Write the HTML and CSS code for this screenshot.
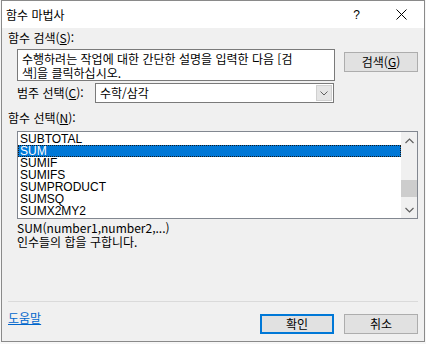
FILE: index.html
```html
<!DOCTYPE html>
<html lang="ko">
<head>
<meta charset="utf-8">
<title>함수 마법사</title>
<link rel="stylesheet" href="styles.css">
</head>
<body>
<div class="win">
  <div class="titlebar">
    <span class="title">함수 마법사</span>
    <span class="tb-btn help">?</span>
    <span class="tb-btn close">
      <svg width="11" height="11" viewBox="0 0 11 11"><path d="M0.5 0.5 L10.5 10.5 M10.5 0.5 L0.5 10.5" stroke="#000" stroke-width="1" fill="none"/></svg>
    </span>
  </div>
  <div class="content">
    <div class="label">함수 검색(<u>S</u>):</div>
    <div class="search-row">
      <div class="search-box">수행하려는 작업에 대한 간단한 설명을 입력한 다음 [검<br>색]을 클릭하십시오.</div>
      <div class="btn search-btn">검색(<u>G</u>)</div>
    </div>
    <div class="cat-row">
      <span class="cat-label">범주 선택(<u>C</u>):</span>
      <div class="combo">
        <span class="combo-text">수학/삼각</span>
        <span class="drop">
          <svg width="8" height="5" viewBox="0 0 8 5"><path d="M0.5 0.5 L4 4 L7.5 0.5" stroke="#606060" stroke-width="1" fill="none"/></svg>
        </span>
      </div>
    </div>
    <div class="label fn-label">함수 선택(<u>N</u>):</div>
    <div class="listbox">
      <ul class="items">
        <li class="item">SUBTOTAL</li>
        <li class="item sel">SUM</li>
        <li class="item">SUMIF</li>
        <li class="item">SUMIFS</li>
        <li class="item">SUMPRODUCT</li>
        <li class="item">SUMSQ</li>
        <li class="item">SUMX2MY2</li>
      </ul>
      <div class="scrollbar">
        <div class="sb-arrow">
          <svg width="9" height="6" viewBox="0 0 9 6"><path d="M0.5 5 L4.5 1 L8.5 5" stroke="#606060" stroke-width="1.2" fill="none"/></svg>
        </div>
        <div class="sb-track"><div class="sb-thumb"></div></div>
        <div class="sb-arrow">
          <svg width="9" height="6" viewBox="0 0 9 6"><path d="M0.5 1 L4.5 5 L8.5 1" stroke="#606060" stroke-width="1.2" fill="none"/></svg>
        </div>
      </div>
    </div>
    <div class="desc">
      <div class="syntax">SUM(number1,number2,...)</div>
      <div>인수들의 합을 구합니다.</div>
    </div>
  </div>
  <div class="footer">
    <div class="sep"></div>
    <div class="foot-row">
      <a class="link">도움말</a>
      <div class="btn default">확인</div>
      <div class="btn">취소</div>
    </div>
  </div>
</div>
</body>
</html>
```
FILE: styles.css
```css
html, body {
  margin: 0;
  padding: 0;
}
body {
  width: 426px;
  height: 344px;
  overflow: hidden;
  background: #f7f7f7;
  font-family: "Noto Sans CJK KR", "Noto Sans", sans-serif;
  font-size: 12px;
  color: #000;
}
.win {
  margin-left: 1px;
  width: 424px;
  height: 342px;
  box-sizing: border-box;
  border: 1px solid #8a8a8a;
  background: #f0f0f0;
  display: flex;
  flex-direction: column;
}
.titlebar {
  flex: 0 0 27px;
  height: 27px;
  background: #fff;
  display: flex;
  align-items: center;
}
.title {
  flex: 1;
  padding-left: 4px;
  line-height: 14px;
}
.tb-btn {
  width: 45px;
  height: 27px;
  display: flex;
  align-items: center;
  justify-content: center;
}
.help {
  font-family: "Liberation Sans", sans-serif;
  font-size: 12px;
}
.content {
  flex: 1;
  padding: 3px 6px 0 6px;
}
.label {
  line-height: 14px;
}
.search-row {
  display: flex;
  align-items: flex-start;
  gap: 9px;
  margin: 4px 0 0 9px;
}
.search-box {
  width: 318px;
  height: 32px;
  box-sizing: border-box;
  border: 1px solid #7a7a7a;
  background: #fff;
  padding: 2px 0 0 4px;
  line-height: 14px;
  white-space: nowrap;
  overflow: hidden;
}
.btn {
  width: 74px;
  height: 20px;
  box-sizing: border-box;
  border: 1px solid #adadad;
  background: #e1e1e1;
  display: flex;
  align-items: center;
  justify-content: center;
  line-height: 14px;
}
.search-btn {
  margin-top: 3px;
}
.cat-row {
  display: flex;
  align-items: center;
  margin: 2px 0 0 9px;
}
.cat-label {
  flex: 0 0 78px;
  line-height: 14px;
}
.combo {
  width: 239px;
  height: 20px;
  box-sizing: border-box;
  border: 1px solid #7a7a7a;
  background: #fff;
  display: flex;
  align-items: center;
}
.combo-text {
  flex: 1;
  padding-left: 4px;
  line-height: 14px;
}
.drop {
  width: 16px;
  height: 16px;
  margin-right: 1px;
  background: #e5e5e5;
  border: 1px solid #d0d0d0;
  box-sizing: border-box;
  display: flex;
  align-items: center;
  justify-content: center;
}
.fn-label {
  margin-top: 8px;
}
.listbox {
  margin: 6px 0 0 9px;
  width: 401px;
  height: 88px;
  box-sizing: border-box;
  border: 1px solid #828790;
  background: #fff;
  display: flex;
}
.items {
  flex: 1;
  list-style: none;
  margin: 0;
  padding: 1px 0 0 0;
  font-family: "Liberation Sans", Arial, sans-serif;
  font-size: 12px;
  line-height: 12px;
}
.item {
  height: 12px;
  padding-left: 2px;
  box-sizing: border-box;
}
.item.sel {
  background: #0078d7;
  color: #fff;
  outline: 1px dotted #1a1a1a;
  outline-offset: -1px;
}
.scrollbar {
  width: 16px;
  background: #f0f0f0;
  display: flex;
  flex-direction: column;
}
.sb-arrow {
  height: 17px;
  display: flex;
  align-items: center;
  justify-content: center;
}
.sb-track {
  flex: 1;
  padding-top: 31px;
}
.sb-thumb {
  height: 17px;
  background: #cdcdcd;
}
.desc {
  margin: 2px 0 0 9px;
  line-height: 14px;
}
.footer {
  flex: 0 0 auto;
}
.sep {
  height: 1px;
  margin: 0 6px;
  background: #dadada;
}
.foot-row {
  display: flex;
  align-items: flex-start;
  gap: 10px;
  padding: 12px 6px 7px 6px;
}
.link {
  flex: 1;
  margin-top: -3px;
  line-height: 14px;
  color: #0066cc;
  text-decoration: underline;
}
.btn.default {
  border: 2px solid #0078d7;
}
```
